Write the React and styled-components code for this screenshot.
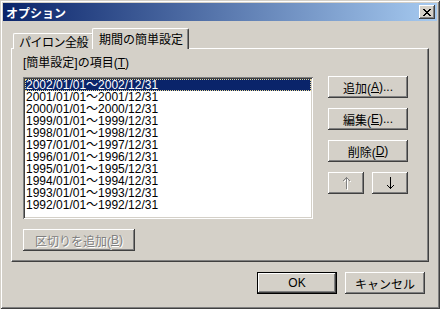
import React, { useState } from 'react'
import styled, { createGlobalStyle, css } from 'styled-components';

const GlobalStyle = createGlobalStyle`
  html, body {
    margin:0;
    padding:0;
    background:#d4d0c8;
  }
  body {
    font-family:"Liberation Sans", "Noto Sans CJK JP", sans-serif;
    font-size:12px;
  }
`;

const ranges = [2002, 2001, 2000, 1999, 1998, 1997, 1996, 1995, 1994, 1993, 1992]

function Arrow({ up, color }) {
  return (
    <svg width="7" height="12" viewBox="0 0 7 12" shapeRendering="crispEdges">
      <g fill={color} transform={up ? '' : 'rotate(180 3.5 6)'}>
        <rect x="3" y="0" width="1" height="12" />
        <rect x="2" y="1" width="3" height="1" />
        <rect x="1" y="2" width="1" height="1" />
        <rect x="5" y="2" width="1" height="1" />
        <rect x="0" y="3" width="1" height="1" />
        <rect x="6" y="3" width="1" height="1" />
      </g>
    </svg>
  )
}

export default function App() {

  const [selected, setSelected] = useState(0)

  return (
    <>
      <GlobalStyle />
      <Window>
        <TitleBar>
          <Title>オプション</Title>
          <CloseButton>
            <svg width="8" height="7" viewBox="0 0 8 7" shapeRendering="crispEdges">
              <path d="M0 0h2v1h-2zM6 0h2v1h-2zM1 1h2v1h-2zM5 1h2v1h-2zM2 2h4v1h-4zM3 3h2v1h-2zM2 4h4v1h-4zM1 5h2v1h-2zM5 5h2v1h-2zM0 6h2v1h-2zM6 6h2v1h-2z" fill="#000" />
            </svg>
          </CloseButton>
        </TitleBar>

        <Body>
          <TabRow>
            <Tab>パイロン全般</Tab>
            <Tab active>期間の簡単設定</Tab>
          </TabRow>

          <Panel>
            <LeftColumn>
              <Label>[簡単設定]の項目(<u>T</u>)</Label>
              <ListBox>
                {ranges.map((y, i) => (
                  <Row key={y} selected={i === selected} onClick={() => setSelected(i)}>
                    {y}/01/01～{y}/12/31
                  </Row>
                ))}
              </ListBox>
              <Button width="112px" disabled>区切りを追加(<u>B</u>)</Button>
            </LeftColumn>

            <RightColumn>
              <Button width="80px">追加(<u>A</u>)...</Button>
              <Button width="80px">編集(<u>E</u>)...</Button>
              <Button width="80px">削除(<u>D</u>)</Button>
              <ArrowRow>
                <Button width="36px" disabled><Embossed><Arrow up color="#808080" /></Embossed></Button>
                <Button width="36px"><Arrow color="#000000" /></Button>
              </ArrowRow>
            </RightColumn>
          </Panel>

          <Footer>
            <Button width="80px" isDefault>OK</Button>
            <Button width="80px">キャンセル</Button>
          </Footer>
        </Body>
      </Window>
    </>
  )
}

const Window = styled.div`
  width:440px;
  height:309px;
  box-sizing:border-box;
  padding:3px;
  background:#d4d0c8;
  box-shadow:
    inset 1px 1px 0 #d4d0c8,
    inset -1px -1px 0 #404040,
    inset 2px 2px 0 #ffffff,
    inset -2px -2px 0 #808080;
  display:flex;
  flex-direction:column;
`;

const TitleBar = styled.div`
  height:18px;
  display:flex;
  align-items:center;
  justify-content:space-between;
  padding:0 2px 0 3px;
  background:linear-gradient(to right, #0a246a, #a6caf0);
`;

const Title = styled.span`
  color:white;
  font-weight:bold;
  font-size:12px;
`;

const CloseButton = styled.div`
  width:16px;
  height:14px;
  box-sizing:border-box;
  display:flex;
  align-items:center;
  justify-content:center;
  background:#d4d0c8;
  box-shadow:
    inset -1px -1px 0 #404040,
    inset 1px 1px 0 #ffffff,
    inset -2px -2px 0 #808080;
`;

const Body = styled.div`
  display:flex;
  flex-direction:column;
  padding:7px 8px 0 8px;
`;

const TabRow = styled.div`
  display:flex;
  align-items:flex-end;
  height:21px;
  padding-left:2px;
  position:relative;
  z-index:1;
  margin-bottom:-1px;
`;

const Tab = styled.div`
  height:16px;
  box-sizing:border-box;
  padding:0 5px 0 5px;
  display:flex;
  align-items:center;
  color:#000;
  background:#d4d0c8;
  border-top:1px solid #ffffff;
  border-left:1px solid #ffffff;
  border-right:1px solid #404040;
  border-top-left-radius:2px;
  border-top-right-radius:2px;
  box-shadow:inset -1px 0 0 #808080;
  white-space:nowrap;
  letter-spacing:-0.5px;

  ${({active}) => active && css`
    position:relative;
    height:21px;
    margin-left:-2px;
    padding:0 5px 1px 6px;
    letter-spacing:0;
  `}
`;

const Panel = styled.div`
  height:214px;
  box-sizing:border-box;
  display:flex;
  padding:8px 0 0 11px;
  border-top:1px solid #ffffff;
  border-left:1px solid #ffffff;
  border-right:1px solid #404040;
  border-bottom:1px solid #404040;
  box-shadow:inset -1px -1px 0 #808080;
`;

const LeftColumn = styled.div`
  display:flex;
  flex-direction:column;
  align-items:flex-start;
`;

const Label = styled.div`
  line-height:13px;
  height:13px;
  margin-bottom:7px;
  color:#000;
`;

const ListBox = styled.div`
  width:290px;
  height:142px;
  box-sizing:border-box;
  padding:2px;
  background:#ffffff;
  box-shadow:
    inset 1px 1px 0 #808080,
    inset -1px -1px 0 #ffffff,
    inset 2px 2px 0 #404040,
    inset -2px -2px 0 #d4d0c8;
  margin-bottom:10px;
  overflow:hidden;
`;

const Row = styled.div`
  height:12px;
  line-height:12px;
  padding-left:1px;
  box-sizing:border-box;
  overflow:hidden;
  white-space:nowrap;
  font-size:12px;
  color:${({selected}) => (selected ? '#ffffff' : '#000000')};
  background:${({selected}) => (selected ? '#0a246a' : 'transparent')};
  outline:${({selected}) => (selected ? '1px dotted #e8d890' : 'none')};
  outline-offset:-1px;
`;

const RightColumn = styled.div`
  display:flex;
  flex-direction:column;
  gap:10px;
  margin-left:15px;
  padding-top:19px;
`;

const ArrowRow = styled.div`
  display:flex;
  gap:8px;
`;

const Embossed = styled.span`
  display:inline-flex;
  filter:drop-shadow(1px 1px 0 #ffffff);
`;

const Button = styled.button`
  width:${({width}) => width};
  height:22px;
  box-sizing:border-box;
  padding:0;
  border:none;
  display:flex;
  align-items:center;
  justify-content:center;
  font-family:"Liberation Sans", "Noto Sans CJK JP", sans-serif;
  font-size:12px;
  background:#d4d0c8;
  color:#000;
  box-shadow:
    inset -1px -1px 0 #404040,
    inset 1px 1px 0 #ffffff,
    inset -2px -2px 0 #808080;

  ${({isDefault}) => isDefault && css`
    box-shadow:
      inset 0 0 0 1px #000000,
      inset -2px -2px 0 #404040,
      inset 2px 2px 0 #ffffff,
      inset -3px -3px 0 #808080;
  `}

  &:disabled{
    color:#808080;
    text-shadow:1px 1px 0 #ffffff;
  }

  u{
    text-underline-offset:1px;
  }
`;

const Footer = styled.div`
  display:flex;
  justify-content:flex-end;
  gap:8px;
  margin-top:10px;
  padding-right:4px;
`;
